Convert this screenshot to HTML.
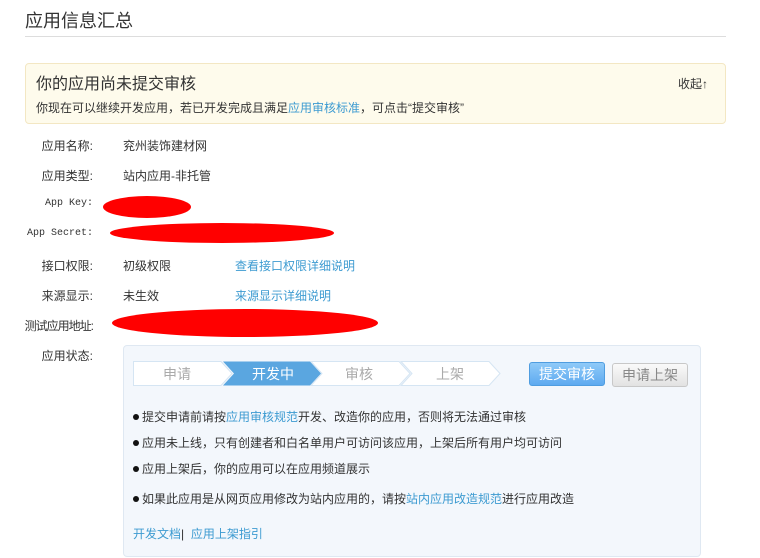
<!DOCTYPE html>
<html><head><meta charset="utf-8">
<style>
*{margin:0;padding:0;box-sizing:border-box}
body{width:760px;height:558px;background:#fff;font-family:"Liberation Sans","Noto Sans CJK SC","WenQuanYi Zen Hei",sans-serif;font-size:12px;color:#333;position:relative;overflow:hidden}
.a{position:absolute;white-space:nowrap}
.lk{color:#3d9bd1}
.lab{position:absolute;width:93px;text-align:right;left:0;font-size:12px;color:#333;white-space:nowrap}
.mono{font-family:"Liberation Mono",monospace;font-size:10px}
.bul{position:absolute;left:133px;font-size:12px;white-space:nowrap}
.bul:before{content:"";display:inline-block;width:6px;height:6px;border-radius:50%;background:#111;margin-right:3px;vertical-align:1px}
</style></head><body>
<div class="a" style="left:25px;top:7px;font-size:18px;color:#333">应用信息汇总</div>
<div class="a" style="left:25px;top:36px;width:701px;height:1px;background:#ddd"></div>

<div class="a" style="left:25px;top:63px;width:701px;height:61px;background:#fefbec;border:1px solid #f3e7c3;border-radius:4px"></div>
<div class="a" style="left:36px;top:70px;font-size:16px;color:#333">你的应用尚未提交审核</div>
<div class="a" style="left:678px;top:75px;font-size:12px">收起↑</div>
<div class="a" style="left:36px;top:99px;font-size:12px">你现在可以继续开发应用，若已开发完成且满足<span class="lk">应用审核标准</span>，可点击“提交审核”</div>

<div class="lab" style="top:137px">应用名称:</div><div class="a" style="left:123px;top:137px">兖州装饰建材网</div>
<div class="lab" style="top:167px">应用类型:</div><div class="a" style="left:123px;top:167px">站内应用-非托管</div>
<div class="lab mono" style="top:198px">App Key:</div>
<div class="lab mono" style="top:228px">App Secret:</div>
<div class="lab" style="top:257px">接口权限:</div><div class="a" style="left:123px;top:257px">初级权限</div><div class="a lk" style="left:235px;top:257px">查看接口权限详细说明</div>
<div class="lab" style="top:287px">来源显示:</div><div class="a" style="left:123px;top:287px">未生效</div><div class="a lk" style="left:235px;top:287px">来源显示详细说明</div>
<div class="lab" style="top:317px;letter-spacing:-1px">测试应用地址:</div>
<div class="lab" style="top:347px">应用状态:</div>

<svg class="a" style="left:0;top:0" width="760" height="558">
<ellipse cx="147" cy="207" rx="44" ry="11" fill="#f00"/>
<ellipse cx="222" cy="233" rx="112" ry="10" fill="#f00"/>
<ellipse cx="245" cy="323" rx="133" ry="14" fill="#f00"/>
</svg>

<div class="a" style="left:123px;top:345px;width:578px;height:212px;background:#f3f7fc;border:1px solid #dfe8f2;border-radius:4px"></div>
<svg class="a" style="left:133px;top:361px" width="380" height="26">
<polygon points="0.5,0.5 88,0.5 99,12.5 88,24.5 0.5,24.5" fill="#fff" stroke="#d5e5f3"/>
<polygon points="90,0.5 177,0.5 188,12.5 177,24.5 90,24.5 101,12.5" fill="#5aa6e0"/>
<polygon points="178,0.5 266,0.5 277,12.5 266,24.5 178,24.5 189,12.5" fill="#fff" stroke="#d5e5f3"/>
<polygon points="268,0.5 356,0.5 367,12.5 356,24.5 268,24.5 279,12.5" fill="#fff" stroke="#d5e5f3"/>
<text x="44" y="18" font-size="14" fill="#aaa" text-anchor="middle" font-family="Noto Sans CJK SC">申请</text>
<text x="140" y="18" font-size="14" fill="#fff" text-anchor="middle" font-family="Noto Sans CJK SC">开发中</text>
<text x="226" y="18" font-size="14" fill="#aaa" text-anchor="middle" font-family="Noto Sans CJK SC">审核</text>
<text x="317" y="18" font-size="14" fill="#aaa" text-anchor="middle" font-family="Noto Sans CJK SC">上架</text>
</svg>
<div class="a" style="left:529px;top:362px;width:76px;height:24px;border:1px solid #4f9de0;border-radius:3px;background:linear-gradient(#8fcaf8,#5eaaf0);color:#fff;font-size:14px;text-align:center;line-height:22px">提交审核</div>
<div class="a" style="left:612px;top:363px;width:76px;height:24px;border:1px solid #c8c8c8;border-radius:3px;background:linear-gradient(#fafafa,#e2e2e2);color:#888;font-size:14px;text-align:center;line-height:22px">申请上架</div>

<div class="bul" style="top:408px">提交申请前请按<span class="lk">应用审核规范</span>开发、改造你的应用，否则将无法通过审核</div>
<div class="bul" style="top:434px">应用未上线，只有创建者和白名单用户可访问该应用，上架后所有用户均可访问</div>
<div class="bul" style="top:460px">应用上架后，你的应用可以在应用频道展示</div>
<div class="bul" style="top:490px">如果此应用是从网页应用修改为站内应用的，请按<span class="lk">站内应用改造规范</span>进行应用改造</div>
<div class="a" style="left:133px;top:525px"><span class="lk">开发文档</span>| &nbsp;<span class="lk">应用上架指引</span></div>
</body></html>
